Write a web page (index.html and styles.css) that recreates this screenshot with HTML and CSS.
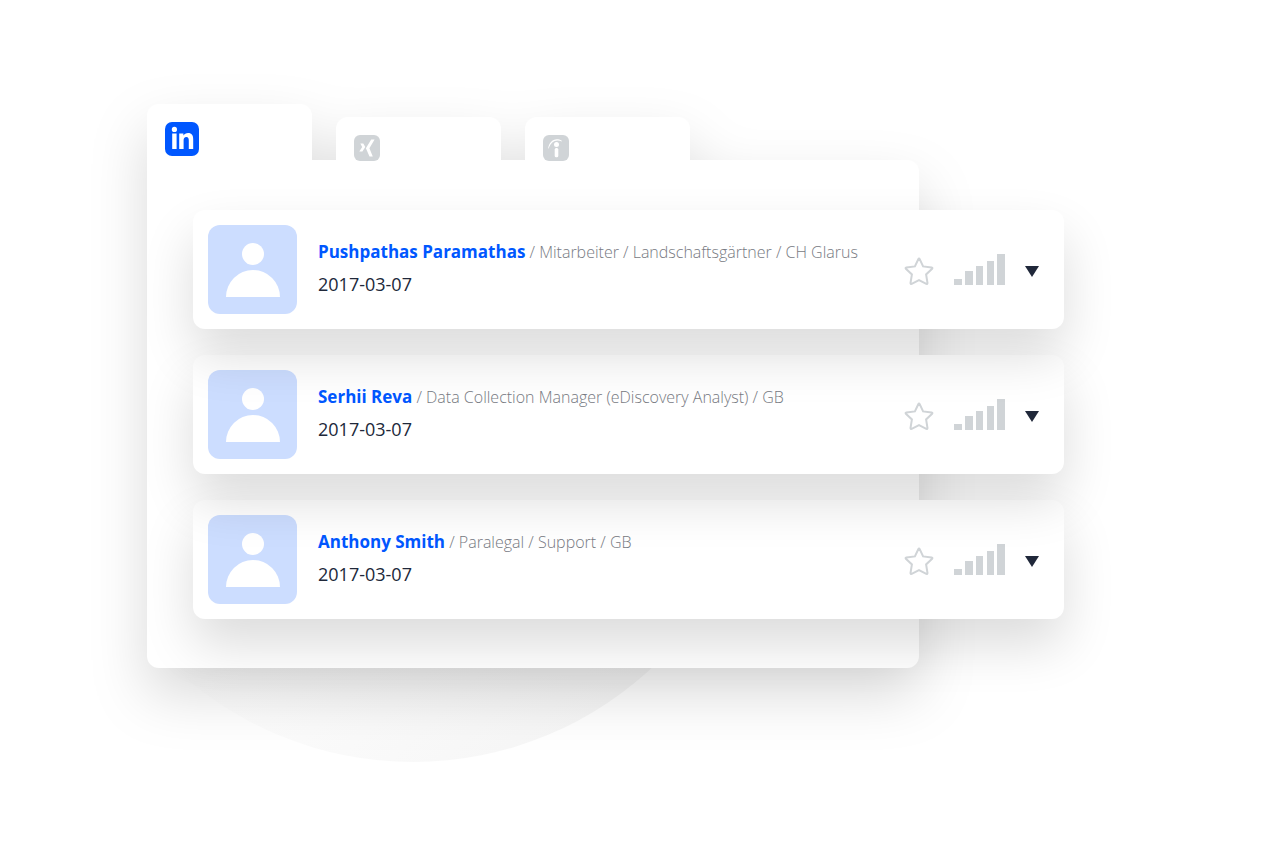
FILE: index.html
```html
<!DOCTYPE html>
<html lang="de">
<head>
  <meta charset="UTF-8">
  <meta name="viewport" content="width=device-width, initial-scale=1.0">
  <title>Profile</title>
  <link rel="stylesheet" href="styles.css">
</head>
<body>
  <!-- Shared icons -->
  <svg class="sprite" aria-hidden="true">
    <symbol id="person" viewBox="0 0 89 89">
      <circle cx="45" cy="29" r="11"/>
      <path d="M18 72a27 27 0 0 1 54 0z"/>
    </symbol>
    <symbol id="star" viewBox="0 0 30 36">
      <path d="M14.300 7.200q.7-1.500 1.400 0l3.400 7.200 8.500 1q1.300.4.500 1.400l-6 5.600 1.400 8.600q-.1 1.300-1.200.9L15 28.200l-7.300 3.700q-1.100.4-1.200-.9l1.400-8.600-6-5.600q-.8-1 .5-1.400l8.500-1z"/>
    </symbol>
    <symbol id="bars" viewBox="0 0 51 36">
      <path d="M0 27h8v6H0zM11 19h8v14h-8zM22 14h7v19h-7zM33 9h7v24h-7zM43 2h8v31h-8z"/>
    </symbol>
    <symbol id="arrow" viewBox="0 0 14 36">
      <path d="M0 14h14L7 25z"/>
    </symbol>
  </svg>

  <main class="stage">
    <div class="board">
      <div class="folder">
        <nav class="tabs">
          <button class="tab active" type="button" aria-label="LinkedIn">
            <svg viewBox="0 0 34 34">
              <rect width="34" height="34" rx="7"/>
              <g fill="#fff">
                <circle cx="9.400" cy="7.400" r="2.600"/>
                <path d="M7.200 11.500h4.400V27H7.200zM14.200 11.500h4.200v2.100c1-1.600 2.600-2.500 4.700-2.500 3.700 0 5.100 2.300 5.100 6.200V27h-4.400v-8.600c0-2.200-.6-3.500-2.400-3.500-2 0-2.800 1.400-2.800 3.500V27h-4.400z"/>
              </g>
            </svg>
          </button>
          <button class="tab" type="button" aria-label="Xing">
            <svg viewBox="0 0 26 26">
              <rect width="26" height="26" rx="6"/>
              <path fill="#fff" d="M6.300 8.500h3l2 3.600-2.900 4.500H5.300l2.900-4.500zM17.200 4.500h3.400l-5.200 8.700 3.400 8.300h-3.300l-3.600-8.300z"/>
            </svg>
          </button>
          <button class="tab" type="button" aria-label="Indeed">
            <svg viewBox="0 0 26 26">
              <rect width="26" height="26" rx="6"/>
              <circle cx="13.500" cy="9.500" r="2.500" fill="#fff"/>
              <rect x="11.700" y="13" width="3.600" height="9.300" rx="1.500" fill="#fff"/>
              <path fill="#fff" d="M5.200 13.500C6 6.500 12 1.700 18.800 5.800v.8C13 3.800 8 6.500 5.700 13.500z"/>
            </svg>
          </button>
        </nav>
        <div class="sheet"></div>
      </div>

      <section class="results">
        <article class="card">
          <div class="avatar"><svg><use href="#person"/></svg></div>
          <div class="info">
            <p class="headline"><a href="#">Pushpathas Paramathas</a> / Mitarbeiter / Landschaftsgärtner / CH Glarus</p>
            <time datetime="2017-03-07">2017-03-07</time>
          </div>
          <div class="actions">
            <button class="star" type="button" aria-label="Merken"><svg><use href="#star"/></svg></button>
            <svg class="bars"><use href="#bars"/></svg>
            <button class="arrow" type="button" aria-label="Details"><svg><use href="#arrow"/></svg></button>
          </div>
        </article>

        <article class="card">
          <div class="avatar"><svg><use href="#person"/></svg></div>
          <div class="info">
            <p class="headline"><a href="#">Serhii Reva</a> / Data Collection Manager (eDiscovery Analyst) / GB</p>
            <time datetime="2017-03-07">2017-03-07</time>
          </div>
          <div class="actions">
            <button class="star" type="button" aria-label="Merken"><svg><use href="#star"/></svg></button>
            <svg class="bars"><use href="#bars"/></svg>
            <button class="arrow" type="button" aria-label="Details"><svg><use href="#arrow"/></svg></button>
          </div>
        </article>

        <article class="card">
          <div class="avatar"><svg><use href="#person"/></svg></div>
          <div class="info">
            <p class="headline"><a href="#">Anthony Smith</a> / Paralegal / Support / GB</p>
            <time datetime="2017-03-07">2017-03-07</time>
          </div>
          <div class="actions">
            <button class="star" type="button" aria-label="Merken"><svg><use href="#star"/></svg></button>
            <svg class="bars"><use href="#bars"/></svg>
            <button class="arrow" type="button" aria-label="Details"><svg><use href="#arrow"/></svg></button>
          </div>
        </article>
      </section>
    </div>
  </main>
</body>
</html>
```
FILE: styles.css
```css
:root {
  --blue: #0057ff;
  --pale-blue: #ccddff;
  --grey: #d0d4d7;
  --text: #20283a;
  --muted: #777a82;
}

* {
  box-sizing: border-box;
}

body {
  margin: 0;
  background: #fff;
  color: var(--text);
  font-family: "Open Sans", "Noto Sans", sans-serif;
}

button {
  padding: 0;
  border: 0;
  background: none;
  cursor: pointer;
}

svg {
  display: block;
}

.sprite {
  position: absolute;
  width: 0;
  height: 0;
}

.stage {
  min-height: 100vh;
  padding: 104px 216px 104px 147px;
}

.board {
  position: relative;
  display: grid;
  grid-template-columns: 1fr 145px;
}

/* soft disc behind the folder */
.board::before {
  content: "";
  position: absolute;
  left: -84px;
  bottom: -94px;
  width: 700px;
  height: 700px;
  border-radius: 50%;
  background: linear-gradient(135deg, #fff 50%, #f2f2f2 100%);
}

.folder {
  position: relative;
  grid-area: 1 / 1;
  display: flex;
  flex-direction: column;
  filter: drop-shadow(0 26px 28px rgba(0, 0, 0, 0.15));
}

.tabs {
  display: flex;
  align-items: flex-end;
  gap: 24px;
}

.tab {
  z-index: 1;
  display: flex;
  align-items: flex-start;
  width: 165px;
  height: 43px;
  padding: 18px 18px 0;
  border-radius: 12px 12px 0 0;
  background: #fff;
  fill: var(--grey);
}

.tab svg {
  flex: none;
  width: 26px;
  height: 26px;
}

.tab.active {
  height: 56px;
  fill: var(--blue);
}

.tab.active svg {
  width: 34px;
  height: 34px;
}

.sheet {
  flex: 1;
  border-radius: 0 12px 12px 12px;
  background: #fff;
}

.results {
  position: relative;
  grid-area: 1 / 1 / 2 / 3;
  display: flex;
  flex-direction: column;
  gap: 26px;
  padding: 106px 0 49px 46px;
}

/* each card casts its shadow onto the one below */
.card {
  position: relative;
  z-index: 1;
  display: flex;
  align-items: center;
  gap: 21px;
  padding: 15px 25px 15px 15px;
  border-radius: 12px;
  background: #fff;
  box-shadow: 0 26px 52px rgba(0, 0, 0, 0.14);
}

.card:nth-child(1) {
  z-index: 3;
}

.card:nth-child(2) {
  z-index: 2;
}

.avatar {
  border-radius: 12px;
  background: var(--pale-blue);
  fill: #fff;
}

.avatar svg {
  width: 89px;
  height: 89px;
}

.info {
  flex: 1;
  padding-bottom: 4px;
}

.headline {
  margin: 0;
  font-size: 16px;
  font-weight: 300;
  line-height: 32px;
  color: var(--muted);
}

.headline a {
  font-size: 17px;
  font-weight: 700;
  color: var(--blue);
  text-decoration: none;
}

.info time {
  display: block;
  font-size: 18px;
  line-height: 32px;
}

.actions {
  display: flex;
  align-items: center;
  gap: 20px;
}

.actions svg {
  height: 36px;
}

.star svg {
  width: 30px;
  fill: none;
  stroke: var(--grey);
  stroke-width: 2;
}

.bars {
  width: 51px;
  fill: var(--grey);
}

.arrow svg {
  width: 14px;
  fill: var(--text);
}
```
